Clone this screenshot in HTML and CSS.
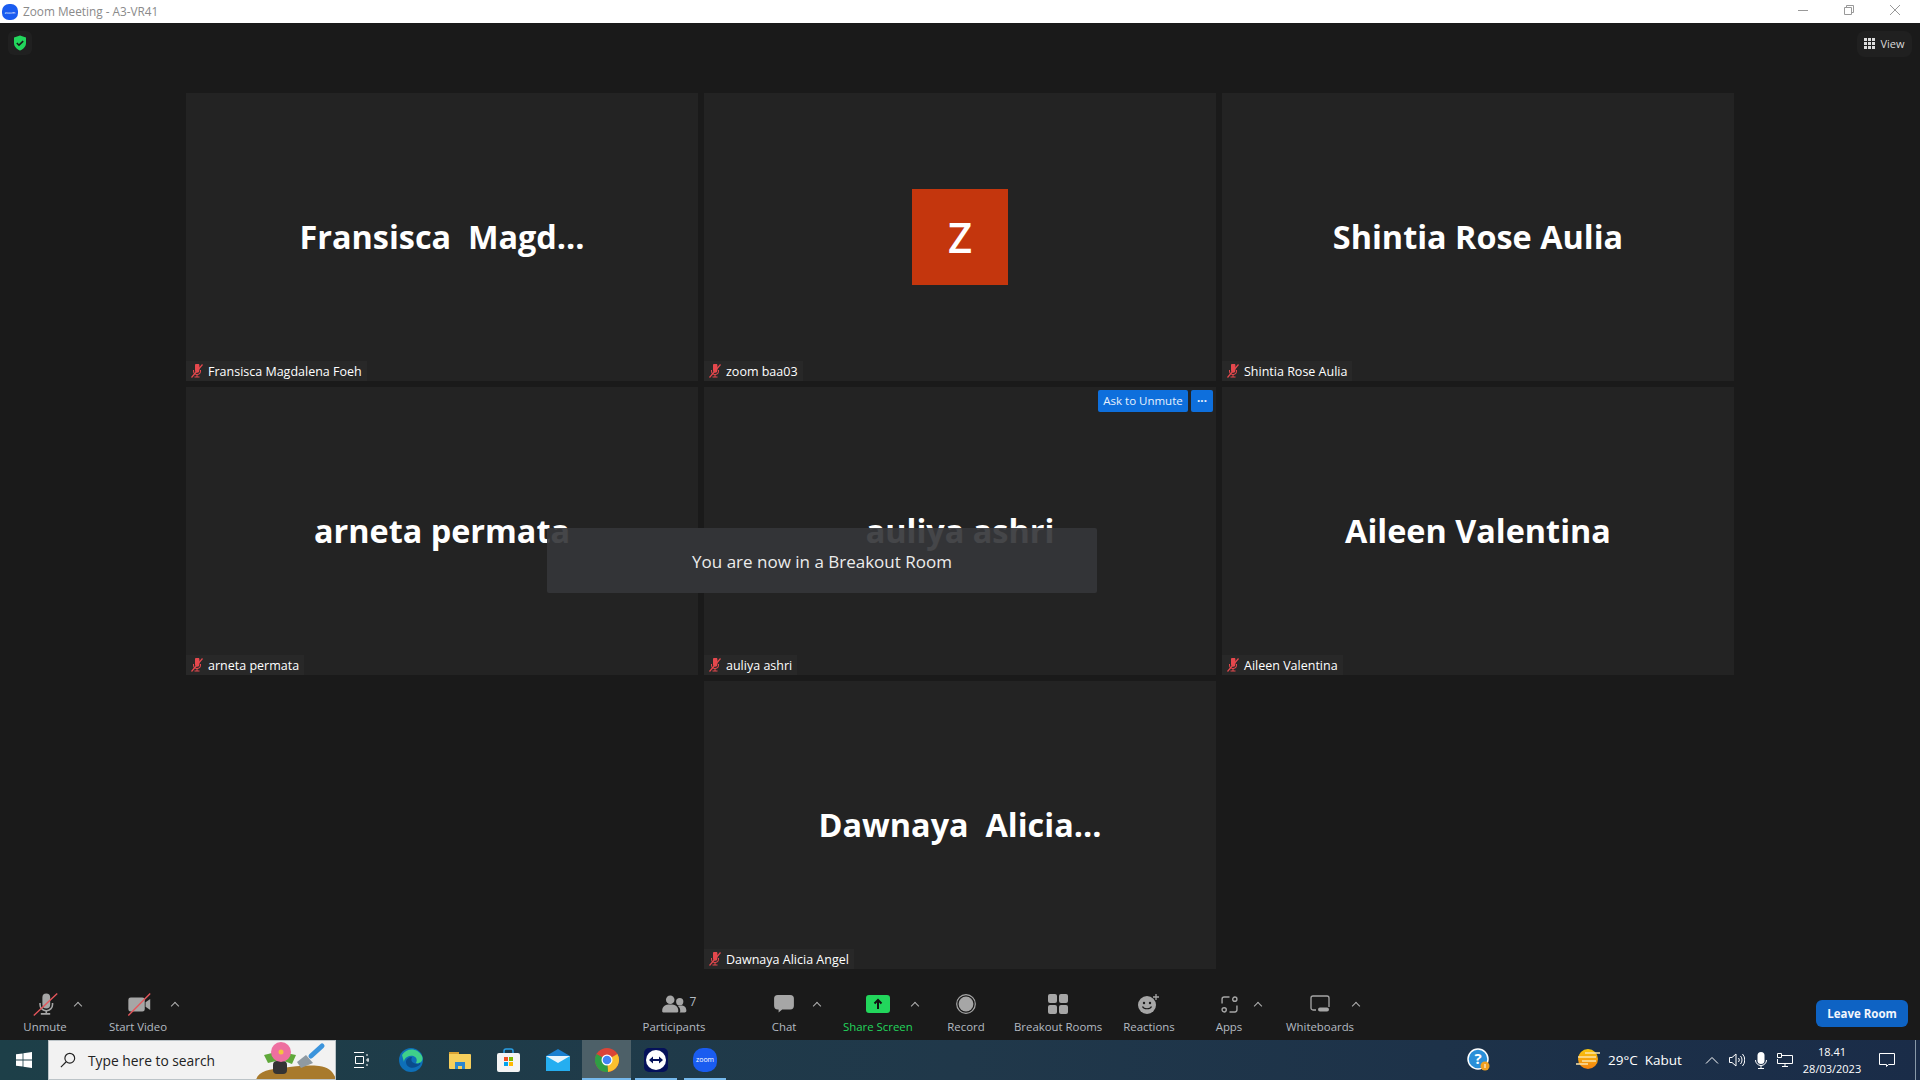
FILE: index.html
```html
<!DOCTYPE html>
<html lang="id">

<head>
    <meta charset="UTF-8">
    <meta name="viewport" content="width=device-width, initial-scale=1.0">
    <title>Zoom Meeting - A3-VR41</title>
    <link rel="stylesheet" href="styles.css">
</head>

<body>
    <svg class="defs" width="0" height="0">
        <symbol id="mic-off" viewBox="0 0 14 14">
            <path fill="#e5484d" d="M5 1.500a2.200 2.200 0 0 1 4.400 0v5a2.200 2.200 0 0 1-4.400 0zM3 6h1v1a3 3 0 0 0 6 0V6h1v1a4 4 0 0 1-3.500 4v1.500h2v1h-5v-1h2V11A4 4 0 0 1 3 7z" />
            <path stroke="#e5484d" stroke-width="1.200" d="M1.500 13.500 12.500.5" />
        </symbol>
    </svg>

    <div class="titlebar">
        <div class="title-left">
            <svg class="app-logo" width="16" height="16" viewBox="0 0 16 16">
                <rect width="16" height="16" rx="7" fill="#1a5cf0" />
                <text x="8" y="9.500" text-anchor="middle" class="logo-text">zoom</text>
            </svg>
            <span class="title-text">Zoom Meeting - A3-VR41</span>
        </div>
        <div class="win-buttons">
            <svg width="12" height="12" viewBox="0 0 12 12">
                <path d="M1 6.500h10" stroke="#999" />
            </svg>
            <svg width="12" height="12" viewBox="0 0 12 12">
                <path d="M1.500 3.500h7v7h-7zM3.500 3.500v-2h7v7h-2" fill="none" stroke="#999" />
            </svg>
            <svg width="12" height="12" viewBox="0 0 12 12">
                <path d="M1 1l10 10M11 1 1 11" stroke="#999" />
            </svg>
        </div>
    </div>

    <div class="meeting">
        <div class="stage">
            <div class="top-btns">
                <div class="shield-btn">
                    <svg width="14" height="16" viewBox="0 0 14 16">
                        <path fill="#22d65c" d="M7 .5 13 2.500V8c0 3.500-2.600 6-6 7.500C3.600 14 1 11.500 1 8V2.500z" />
                        <path fill="none" stroke="#1a1a1a" stroke-width="1.600" d="M3.800 8 6 10.200l4.200-4" />
                    </svg>
                </div>
                <div class="view-btn">
                    <svg width="11" height="11" viewBox="0 0 11 11" fill="#ddd">
                        <rect width="3" height="3" />
                        <rect x="4" width="3" height="3" />
                        <rect x="8" width="3" height="3" />
                        <rect y="4" width="3" height="3" />
                        <rect x="4" y="4" width="3" height="3" />
                        <rect x="8" y="4" width="3" height="3" />
                        <rect y="8" width="3" height="3" />
                        <rect x="4" y="8" width="3" height="3" />
                        <rect x="8" y="8" width="3" height="3" />
                    </svg>
                    <span>View</span>
                </div>
            </div>

            <div class="grid">
                <div class="tile">
                    <div class="big-name">Fransisca&nbsp; Magd...</div>
                    <div class="name-tag"><svg width="14" height="14"><use href="#mic-off" /></svg><span>Fransisca Magdalena Foeh</span></div>
                </div>
                <div class="tile">
                    <div class="avatar">Z</div>
                    <div class="name-tag"><svg width="14" height="14"><use href="#mic-off" /></svg><span>zoom baa03</span></div>
                </div>
                <div class="tile">
                    <div class="big-name">Shintia Rose Aulia</div>
                    <div class="name-tag"><svg width="14" height="14"><use href="#mic-off" /></svg><span>Shintia Rose Aulia</span></div>
                </div>
                <div class="tile">
                    <div class="big-name">arneta permata</div>
                    <div class="name-tag"><svg width="14" height="14"><use href="#mic-off" /></svg><span>arneta permata</span></div>
                </div>
                <div class="tile">
                    <div class="big-name">auliya ashri</div>
                    <div class="tile-actions">
                        <span class="ask-btn">Ask to Unmute</span>
                        <span class="more-btn">···</span>
                    </div>
                    <div class="name-tag"><svg width="14" height="14"><use href="#mic-off" /></svg><span>auliya ashri</span></div>
                </div>
                <div class="tile">
                    <div class="big-name">Aileen Valentina</div>
                    <div class="name-tag"><svg width="14" height="14"><use href="#mic-off" /></svg><span>Aileen Valentina</span></div>
                </div>
                <div class="tile last-tile">
                    <div class="big-name">Dawnaya&nbsp; Alicia...</div>
                    <div class="name-tag"><svg width="14" height="14"><use href="#mic-off" /></svg><span>Dawnaya Alicia Angel</span></div>
                </div>
            </div>

            <div class="toast">You are now in a Breakout Room</div>
        </div>

        <div class="toolbar">
            <div class="tool-group left-group">
                <div class="tool tool-unmute">
                    <svg width="25" height="23" viewBox="0 0 32 28">
                        <path fill="#a6a6a6" d="M12 5a5 5 0 0 1 10 0v9a5 5 0 0 1-10 0zM8 12h2v2a7 7 0 0 0 14 0v-2h2v2a9 9 0 0 1-8 9v2h4v2H10v-2h6v-2a9 9 0 0 1-8-9z" />
                        <path stroke="#e5565b" stroke-width="1.800" d="M1 28 31 0" />
                    </svg>
                    <span>Unmute</span>
                </div>
                <span class="caret"></span>
                <div class="tool tool-video">
                    <svg width="25" height="23" viewBox="0 0 32 28">
                        <path fill="#a6a6a6" d="M3 8a3 3 0 0 1 3-3h15a3 3 0 0 1 3 3v12a3 3 0 0 1-3 3H6a3 3 0 0 1-3-3zM25 11l6-4v14l-6-4z" />
                        <path stroke="#e5565b" stroke-width="1.800" d="M3 28 31 0" />
                    </svg>
                    <span>Start Video</span>
                </div>
                <span class="caret"></span>
            </div>

            <div class="tool-group center-group">
                <div class="tool tool-participants">
                    <div class="icon-count">
                        <svg width="25" height="19" viewBox="0 0 26 20" fill="#a6a6a6">
                            <circle cx="8.500" cy="5" r="4.500" />
                            <path d="M0 17c0-5 3-7 8.500-7s8.500 2 8.500 7c0 1-1 1.500-2 1.500H2c-1 0-2-.5-2-1.500z" />
                            <circle cx="18.500" cy="7" r="3.800" />
                            <path d="M18 18.500c1 0 1-1 1-1.800 0-2-.8-4-2.500-5 1-.5 2-.6 3-.6 4 0 6 1.700 6 5.600 0 1-.7 1.800-1.700 1.800z" />
                        </svg>
                        <span class="count">7</span>
                    </div>
                    <span>Participants</span>
                </div>
                <div class="tool tool-chat">
                    <svg width="20" height="18" viewBox="0 0 22 20">
                        <path fill="#a6a6a6" d="M4 0h14a4 4 0 0 1 4 4v8a4 4 0 0 1-4 4H9l-4 3.500V16H4a4 4 0 0 1-4-4V4a4 4 0 0 1 4-4z" />
                    </svg>
                    <span>Chat</span>
                </div>
                <span class="caret"></span>
                <div class="tool tool-share">
                    <svg width="24" height="18" viewBox="0 0 24 18">
                        <rect width="24" height="18" rx="3" fill="#22d65c" />
                        <path fill="none" stroke="#111" stroke-width="2" d="M12 14V5M8.500 8.500 12 5l3.500 3.500" />
                    </svg>
                    <span>Share Screen</span>
                </div>
                <span class="caret"></span>
                <div class="tool tool-record">
                    <svg width="20" height="20" viewBox="0 0 20 20">
                        <circle cx="10" cy="10" r="9.300" fill="none" stroke="#a6a6a6" stroke-width="1.200" />
                        <circle cx="10" cy="10" r="7.400" fill="#a6a6a6" />
                    </svg>
                    <span>Record</span>
                </div>
                <div class="tool tool-breakout">
                    <svg width="20" height="20" viewBox="0 0 20 20" fill="#a6a6a6">
                        <rect width="9" height="9" rx="2" />
                        <rect x="11" width="9" height="9" rx="2" />
                        <rect y="11" width="9" height="9" rx="2" />
                        <rect x="11" y="11" width="9" height="9" rx="2" />
                    </svg>
                    <span>Breakout Rooms</span>
                </div>
                <div class="tool tool-reactions">
                    <svg width="22" height="20" viewBox="0 0 22 20">
                        <circle cx="9" cy="11" r="9" fill="#a6a6a6" />
                        <circle cx="6" cy="9" r="1.200" fill="#1a1a1a" />
                        <circle cx="12" cy="9" r="1.200" fill="#1a1a1a" />
                        <path d="M4.500 12.500c1.500 3 7.500 3 9 0" fill="none" stroke="#1a1a1a" stroke-width="1.200" />
                        <path d="M18 0v6M15 3h6" stroke="#a6a6a6" stroke-width="1.300" />
                    </svg>
                    <span>Reactions</span>
                </div>
                <div class="tool tool-apps">
                    <svg width="17" height="17" viewBox="0 0 16 16" fill="none" stroke="#a6a6a6" stroke-width="1.300">
                        <path d="M1 7V3a2 2 0 0 1 2-2h5M15 9v4a2 2 0 0 1-2 2H8" />
                        <circle cx="13" cy="3" r="2" />
                        <circle cx="3" cy="13" r="2" />
                    </svg>
                    <span>Apps</span>
                </div>
                <span class="caret"></span>
                <div class="tool tool-whiteboards">
                    <svg width="20" height="18" viewBox="0 0 20 18">
                        <path d="M6 15H3a2 2 0 0 1-2-2V3a2 2 0 0 1 2-2h14a2 2 0 0 1 2 2v9" fill="none" stroke="#a6a6a6" stroke-width="1.300" />
                        <rect x="8" y="12.500" width="11" height="4" rx="2" fill="#a6a6a6" />
                    </svg>
                    <span>Whiteboards</span>
                </div>
                <span class="caret"></span>
            </div>

            <div class="leave-btn">Leave Room</div>
        </div>
    </div>

    <div class="taskbar">
        <div class="start-btn">
            <svg width="16" height="16" viewBox="0 0 16 16" fill="#fff">
                <path d="M0 2.300 6.600 1.400V7.600H0zM7.400 1.300 16 0V7.600H7.400zM0 8.400H6.600V14.600L0 13.700zM7.400 8.400H16V16L7.400 14.700z" />
            </svg>
        </div>
        <div class="search-box">
            <svg width="16" height="16" viewBox="0 0 18 18" fill="none" stroke="#222" stroke-width="1.300">
                <circle cx="11" cy="7" r="5.500" />
                <path d="M7 11 1 17" />
            </svg>
            <span class="search-text">Type here to search</span>
            <svg class="search-art" width="80" height="40" viewBox="0 0 80 40">
                <path fill="#a87a2c" d="M0 40c2-9 14-11 27-12 12-2 24-3 36-2 10 1 15 6 17 14z" />
                <path fill="#5fa83a" d="M8 15 20 12l4 8-12 3zM30 13l10 2-4 9-8-3z" />
                <path fill="#8f9aa2" d="M41 22 50 15l7 8-12 5z" />
                <rect x="17" y="21" width="14" height="13" rx="4" fill="#333" />
                <circle cx="25" cy="12" r="10" fill="#ee6fa0" />
                <circle cx="25" cy="12" r="2.500" fill="#f3c53f" />
                <path stroke="#3b94dc" stroke-width="5" stroke-linecap="round" d="M55 16 66 6" />
            </svg>
        </div>

        <div class="task-icons">
            <div class="task-icon task-view">
                <svg width="16" height="16" viewBox="0 0 16 16" fill="none" stroke="#fff">
                    <path d="M1 .5h10M1 15.500h10M2.500 4.500h8v7h-8z" />
                    <path d="M14 7h2v2h-2zM14 2v2M14 12v2" />
                </svg>
            </div>
            <div class="task-icon">
                <svg width="24" height="24" viewBox="0 0 24 24">
                    <circle cx="12" cy="12" r="12" fill="#0e6fb8" />
                    <path d="M3 7C7 0 18-1 23 8c2 5-2 8-6 7 3-6-4-9-9-6-2 1-3 3-3 5z" fill="#3fd08a" />
                    <path d="M7 14c0 5 6 7 10 5 2-1 4-2 5-4-2 2-5 1-7 0-3-1-3-4-2-6-3 0-6 2-6 5z" fill="#0a4c8c" />
                </svg>
            </div>
            <div class="task-icon">
                <svg width="22" height="18" viewBox="0 0 22 18">
                    <path d="M0 2a1 1 0 0 1 1-1h7l2 2h11a1 1 0 0 1 1 1v13a1 1 0 0 1-1 1H1a1 1 0 0 1-1-1z" fill="#f6cf5c" />
                    <path d="M0 3h10V1H1a1 1 0 0 0-1 1z" fill="#d9a233" />
                    <path d="M6 18v-7h10v7h-3v-3H9v3z" fill="#2b86cf" />
                </svg>
            </div>
            <div class="task-icon">
                <svg width="23" height="24" viewBox="0 0 23 24">
                    <path d="M7 6V3a2 2 0 0 1 2-2h5a2 2 0 0 1 2 2v3" fill="none" stroke="#2aa0e6" stroke-width="1.500" />
                    <rect y="5" width="23" height="19" rx="2" fill="#f4f4f4" />
                    <rect x="7" y="9" width="4" height="4" fill="#f25022" />
                    <rect x="12" y="9" width="4" height="4" fill="#7fba00" />
                    <rect x="7" y="14" width="4" height="4" fill="#00a4ef" />
                    <rect x="12" y="14" width="4" height="4" fill="#ffb900" />
                </svg>
            </div>
            <div class="task-icon">
                <svg width="24" height="22" viewBox="0 0 24 22">
                    <path d="M0 7 12 0l12 7v15H0z" fill="#1a7fd0" />
                    <path d="M0 7h24v15H0z" fill="#25aef0" />
                    <path d="M0 7h24L12 14z" fill="#e8f4fc" />
                </svg>
            </div>
            <div class="task-icon active">
                <svg width="24" height="24" viewBox="0 0 24 24">
                    <circle cx="12" cy="12" r="12" fill="#db4437" />
                    <path d="M12 12 22.400 6a12 12 0 0 1-9.400 18z" fill="#fbc02d" />
                    <path d="M12 12 13 24A12 12 0 0 1 1.600 6z" fill="#2f9e44" />
                    <circle cx="12" cy="12" r="5.500" fill="#fff" />
                    <circle cx="12" cy="12" r="4.300" fill="#4285f4" />
                </svg>
            </div>
            <div class="task-icon running">
                <svg width="24" height="24" viewBox="0 0 24 24">
                    <rect width="24" height="24" rx="5" fill="#05115a" />
                    <circle cx="12" cy="12" r="10" fill="#fff" />
                    <path d="M5 12l4-3.500V11h6V8.500l4 3.500-4 3.500V13H9v2.500z" fill="#05115a" />
                </svg>
            </div>
            <div class="task-icon running">
                <svg width="24" height="24" viewBox="0 0 24 24">
                    <rect width="24" height="24" rx="10" fill="#1a5cf0" />
                    <text x="12" y="14" text-anchor="middle" class="task-logo-text">zoom</text>
                </svg>
            </div>
        </div>

        <div class="tray">
            <svg class="help-icon" width="24" height="24" viewBox="0 0 24 24">
                <circle cx="11" cy="11" r="10" fill="#2a8fd8" stroke="#fff" stroke-width="1.500" />
                <text x="11" y="16" text-anchor="middle" class="help-text">?</text>
                <circle cx="18" cy="18" r="4.500" fill="#f0a020" />
                <path d="M18 16v4" stroke="#fff" />
            </svg>
            <div class="weather">
                <svg width="24" height="22" viewBox="0 0 24 22">
                    <defs>
                        <linearGradient id="sun" x1="0" y1="0" x2="0" y2="1">
                            <stop offset="0" stop-color="#f9c80e" />
                            <stop offset="1" stop-color="#f5820f" />
                        </linearGradient>
                    </defs>
                    <circle cx="12" cy="10" r="10" fill="url(#sun)" />
                    <path d="M9 4h15M2 8h18M6 12h14M0 15h12" stroke="#fde3a8" stroke-width="1.300" />
                </svg>
                <span class="weather-text">29°C&nbsp; Kabut</span>
            </div>
            <div class="tray-icons">
                <svg width="14" height="8" viewBox="0 0 14 8" fill="none" stroke="#fff">
                    <path d="M1 7.500 7 1.500l6 6" />
                </svg>
                <svg width="16" height="14" viewBox="0 0 16 14" fill="none" stroke="#fff">
                    <path d="M.5 4.500h2.500L7 1v12L3 9.500H.5zM9.500 5a3 3 0 0 1 0 4M11.500 3a6 6 0 0 1 0 8M13.500 1a9 9 0 0 1 0 12" />
                </svg>
                <svg width="12" height="17" viewBox="0 0 12 17">
                    <rect x="2.500" y="0" width="7" height="12" rx="3.500" fill="#fff" />
                    <path d="M.5 8a5.500 5.500 0 0 0 11 0M6 13.500V16M3 16.500h6" fill="none" stroke="#fff" />
                </svg>
                <svg width="16" height="14" viewBox="0 0 16 14" fill="none" stroke="#fff">
                    <path d="M3.500 2.500H15.500V10.500H.5V6M8 10.500v3M5 13.500h6" />
                    <path d="M.5.500h4v4h-4z" fill="#1b2a3c" />
                </svg>
            </div>
            <div class="clock">
                <span>18.41</span>
                <span>28/03/2023</span>
            </div>
            <div class="notify">
                <svg width="16" height="16" viewBox="0 0 16 16" fill="none" stroke="#fff">
                    <path d="M.5 1.500h15v11H9.500l-2 2v-2H.5z" />
                </svg>
            </div>
            <div class="show-desktop"></div>
        </div>
    </div>
</body>

</html>
```

FILE: styles.css
```css
* {
    margin: 0;
    padding: 0;
    box-sizing: border-box;
}

body {
    width: 1920px;
    height: 1080px;
    overflow: hidden;
    display: flex;
    flex-direction: column;
    background: #1a1a1a;
    font-family: 'Open Sans', 'Noto Sans', sans-serif;
    color: #fff;
}

.defs {
    position: absolute;
}

/* window title */
.titlebar {
    height: 23px;
    background: #fff;
    display: flex;
    justify-content: space-between;
    align-items: center;
    flex-shrink: 0;
}

.title-left {
    display: flex;
    align-items: center;
    gap: 5px;
    padding-left: 2px;
}

.logo-text {
    font-size: 4px;
    fill: #fff;
}

.title-text {
    font-size: 11.800px;
    color: #8a8a8a;
    margin-bottom: 2px;
}

.win-buttons {
    display: flex;
    gap: 34px;
    padding-right: 19px;
    margin-top: -3px;
}

/* meeting area */
.meeting {
    flex: 1;
    display: flex;
    flex-direction: column;
}

.stage {
    position: relative;
    height: 946px;
    flex-shrink: 0;
}

.top-btns {
    display: flex;
    justify-content: space-between;
    padding: 8px 8px 0;
    height: 70px;
}

.shield-btn {
    width: 24px;
    height: 24px;
    background: #202020;
    border-radius: 6px;
    display: flex;
    align-items: center;
    justify-content: center;
}

.view-btn {
    width: 55px;
    height: 26px;
    padding-bottom: 2px;
    background: #202020;
    border-radius: 8px;
    display: flex;
    align-items: center;
    justify-content: center;
    gap: 5px;
    font-size: 11px;
    color: #d8d8d8;
}

.grid {
    display: grid;
    grid-template-columns: repeat(3, 512px);
    grid-auto-rows: 288px;
    gap: 6px;
    justify-content: center;
}

.tile {
    position: relative;
    background: #232323;
    display: flex;
    align-items: center;
    justify-content: center;
}

.last-tile {
    grid-column: 2;
}

.big-name {
    font-size: 32.400px;
    font-weight: 700;
    color: #fff;
    white-space: nowrap;
    margin-bottom: 3px;
}

.avatar {
    width: 96px;
    height: 96px;
    padding-bottom: 2px;
    background: #c4360d;
    display: flex;
    align-items: center;
    justify-content: center;
    font-size: 42px;
    font-weight: 600;
}

.name-tag {
    position: absolute;
    left: 0;
    bottom: 0;
    height: 20px;
    display: flex;
    align-items: center;
    gap: 4px;
    padding: 0 5px 0 4px;
    background: #282828;
    font-size: 12.500px;
    color: #fff;
}

.tile-actions {
    position: absolute;
    top: 3px;
    right: 3px;
    display: flex;
    gap: 3px;
}

.ask-btn,
.more-btn {
    background: #0e6fdc;
    border-radius: 2px;
    height: 22px;
    padding-bottom: 1px;
    display: flex;
    align-items: center;
    justify-content: center;
    font-size: 11.500px;
    color: #e8f1fc;
}

.ask-btn {
    width: 90px;
}

.more-btn {
    width: 22px;
    font-weight: 700;
}

.toast {
    position: absolute;
    left: 547px;
    top: 505px;
    width: 550px;
    height: 65px;
    padding-top: 1px;
    border-radius: 2px;
    background: rgba(53, 54, 58, 0.92);
    display: flex;
    align-items: center;
    justify-content: center;
    font-size: 17px;
    color: #ececec;
}

/* bottom controls */
.toolbar {
    flex: 1;
    display: flex;
    align-items: flex-start;
    padding-top: 23px;
}

.tool-group {
    display: flex;
    align-items: flex-start;
}

.tool {
    display: grid;
    grid-template-rows: 24px 16px;
    row-gap: 2px;
    justify-items: center;
    align-items: center;
    font-size: 11.400px;
    color: #b4bac2;
    white-space: nowrap;
}

.tool svg {
    display: block;
}

.caret {
    width: 6px;
    height: 6px;
    margin-top: 11px;
    border-left: 1.500px solid #b0b0b0;
    border-top: 1.500px solid #b0b0b0;
    transform: rotate(45deg);
    flex-shrink: 0;
}

.tool-unmute {
    width: 50px;
    margin-left: 20px;
}

.tool-unmute+.caret {
    margin-left: 5px;
}

.tool-video {
    width: 60px;
    margin-left: 27px;
}

.tool-video+.caret {
    margin-left: 4px;
}

.center-group {
    margin-left: 464px;
}

.icon-count {
    display: flex;
    align-items: flex-start;
    gap: 3px;
    margin-left: 10px;
}

.count {
    font-size: 12px;
    line-height: 14px;
}

.tool-participants {
    width: 64px;
}

.tool-chat {
    width: 30px;
    margin-left: 63px;
}

.tool-chat+.caret {
    margin-left: 15px;
}

.tool-share {
    width: 68px;
    margin-left: 23px;
    color: #22d65c;
}

.tool-share+.caret {
    margin-left: 1px;
}

.tool-record {
    width: 40px;
    margin-left: 28px;
}

.tool-breakout {
    width: 88px;
    margin-left: 28px;
}

.tool-reactions {
    width: 52px;
    margin-left: 21px;
}

.tool-apps {
    width: 28px;
    margin-left: 40px;
}

.tool-apps+.caret {
    margin-left: 12px;
}

.tool-whiteboards {
    width: 66px;
    margin-left: 25px;
}

.tool-whiteboards+.caret {
    margin-left: 1px;
}

.leave-btn {
    margin-left: 457px;
    margin-top: 8px;
    width: 92px;
    height: 27px;
    background: #0e63c4;
    border-radius: 6px;
    display: flex;
    align-items: center;
    justify-content: center;
    font-size: 11.500px;
    font-weight: 700;
    color: #f2f6fc;
}

/* windows taskbar */
.taskbar {
    height: 40px;
    flex-shrink: 0;
    display: flex;
    align-items: center;
    background: linear-gradient(90deg, #1d3f48 0%, #20384a 50%, #1a2c48 100%);
}

.start-btn {
    width: 48px;
    height: 40px;
    display: flex;
    align-items: center;
    justify-content: center;
}

.search-box {
    width: 288px;
    height: 40px;
    background: #f2f2f2;
    border: 1px solid #bcc4c8;
    display: flex;
    align-items: center;
    padding-left: 11px;
    overflow: hidden;
    position: relative;
}

.search-text {
    font-size: 13.800px;
    color: #222;
    margin-left: 12px;
}

.search-art {
    position: absolute;
    right: -1px;
    bottom: -1px;
}

.task-icons {
    display: flex;
    height: 40px;
}

.task-icon {
    width: 49px;
    height: 40px;
    display: flex;
    align-items: center;
    justify-content: center;
}

.task-view {
    width: 50px;
}

.task-icon.active {
    background: #4d6068 linear-gradient(#76b9ed, #76b9ed) bottom / 100% 2px no-repeat;
}

.task-icon.running {
    background: linear-gradient(#76b9ed, #76b9ed) bottom / 42px 2px no-repeat;
}

.task-logo-text {
    font-size: 7px;
    fill: #fff;
}

.tray {
    flex: 1;
    display: flex;
    align-items: center;
    height: 40px;
    font-size: 14px;
    position: relative;
}

.help-icon {
    margin-left: 738px;
}

.help-text {
    font-size: 15px;
    font-weight: 700;
    fill: #fff;
}

.weather {
    display: flex;
    align-items: center;
    gap: 8px;
    margin-left: 85px;
}

.weather-text {
    width: 74px;
    white-space: nowrap;
    font-size: 13.500px;
}

.tray-icons {
    display: flex;
    align-items: center;
    gap: 10px;
    margin-left: 23px;
}

.clock {
    display: flex;
    flex-direction: column;
    align-items: center;
    width: 58px;
    font-size: 11px;
    line-height: 17px;
    margin-left: 10px;
}

.notify {
    margin-left: 18px;
    display: flex;
}

.show-desktop {
    position: absolute;
    left: 1186px;
    top: 0;
    width: 1px;
    height: 40px;
    background: #8899a8;
}
```
